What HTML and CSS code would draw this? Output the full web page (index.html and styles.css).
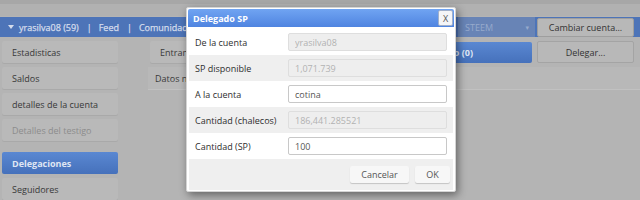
FILE: index.html
```html
<!DOCTYPE html>
<html lang="es">
<head>
<meta charset="utf-8">
<title>Delegado SP</title>
<link rel="stylesheet" href="styles.css">
</head>
<body>
<div class="top"></div>
<div class="nav">
  <div class="nav-left">
    <span class="caret"></span>
    <span class="nav-item">yrasilva08 (59)</span>
    <span class="sep">|</span>
    <span class="nav-item">Feed</span>
    <span class="sep">|</span>
    <span class="nav-item">Comunidades</span>
  </div>
  <div class="select"><span>STEEM</span><span class="sel-arrow">▾</span></div>
  <button class="top-btn">Cambiar cuenta...</button>
</div>
<div class="layout">
  <aside class="side">
    <div class="side-btn">Estadisticas</div>
    <div class="side-btn">Saldos</div>
    <div class="side-btn">detalles de la cuenta</div>
    <div class="side-btn disabled">Detalles del testigo</div>
    <div class="side-btn active">Delegaciones</div>
    <div class="side-btn">Seguidores</div>
  </aside>
  <main class="main">
    <div class="tabs">
      <div class="tab">Entrante (0)</div>
      <div class="tab tab-active">Delegado (0)</div>
      <button class="tab-btn">Delegar...</button>
    </div>
    <div class="panel">Datos no disponibles</div>
  </main>
</div>

<div class="dialog">
  <div class="dlg-title">
    <span>Delegado SP</span>
    <button class="dlg-close">X</button>
  </div>
  <div class="row first">
    <label class="lbl">De la cuenta</label>
    <input class="inp" value="yrasilva08" disabled>
  </div>
  <div class="row alt">
    <label class="lbl">SP disponible</label>
    <input class="inp" value="1,071.739" disabled>
  </div>
  <div class="row">
    <label class="lbl">A la cuenta</label>
    <input class="inp" value="cotina">
  </div>
  <div class="row alt">
    <label class="lbl">Cantidad (chalecos)</label>
    <input class="inp" value="186,441.285521" disabled>
  </div>
  <div class="row">
    <label class="lbl">Cantidad (SP)</label>
    <input class="inp" value="100">
  </div>
  <div class="dlg-foot">
    <button class="foot-btn cancel">Cancelar</button>
    <button class="foot-btn ok">OK</button>
  </div>
</div>
</body>
</html>
```
FILE: styles.css
```css
* { box-sizing: border-box; }
html, body { margin: 0; padding: 0; }
body {
  width: 640px;
  height: 200px;
  overflow: hidden;
  position: relative;
  background: #b4b4b4;
  font-family: "Open Sans", "DejaVu Sans", sans-serif;
  font-size: 9px;
  color: #3a3a3a;
}
button, input { font-family: inherit; font-size: 9px; }

.top {
  height: 16px;
  background: linear-gradient(#a7a7a7 0, #a7a7a7 4px, #b1b1b1 4px);
}
.nav {
  height: 20px;
  margin-top: 1px;
  display: flex;
  align-items: center;
  background: #4d74b8;
}
.nav-left {
  flex: 1;
  display: flex;
  align-items: center;
  height: 100%;
  padding-left: 8px;
  font-size: 9px;
  color: #d4dcec;
  -webkit-text-stroke: 0.25px #d4dcec;
}
.caret {
  width: 0; height: 0;
  border-left: 3px solid transparent;
  border-right: 3px solid transparent;
  border-top: 4px solid #d4dcec;
  margin-right: 5px;
}
.sep { margin: 0 7px 0 8px; }
.select {
  width: 77px;
  height: 20px;
  background: #6884b6;
  color: #97aacc;
  display: flex;
  align-items: center;
  justify-content: space-between;
  padding: 0 6px 0 7px;
  font-size: 9px;
}
.sel-arrow { font-size: 7px; }
.top-btn {
  width: 97px;
  height: 19px;
  margin: 0 6px 0 2px;
  background: #b8b8b8;
  border: 1px solid #9e9e9e;
  border-radius: 2px;
  color: #333;
  padding: 0;
}

.layout { display: flex; }
.side {
  width: 116px;
  margin-left: 2px;
  padding-top: 4px;
  display: flex;
  flex-direction: column;
  gap: 4px;
}
.side-btn {
  height: 22px;
  display: flex;
  align-items: center;
  padding-left: 10px;
  background: #b9b9b9;
  border-radius: 2px;
  box-shadow: 0 1px 0 #a9a9a9;
  color: #383838;
}
.side-btn.disabled { color: #8c8c8c; }
.side-btn.active {
  margin-top: 7px;
  background: linear-gradient(#5a88d2, #4671bb);
  color: #dfe6f3;
  font-weight: bold;
  box-shadow: none;
}

.main { flex: 1; margin-left: 30px; padding-top: 4px; }
.tabs {
  display: flex;
  gap: 4px;
  padding-left: 2px;
  height: 22px;
}
.tab {
  flex: 1;
  display: flex;
  align-items: center;
  padding-left: 10px;
  background: #b9b9b9;
  border-radius: 2px;
  box-shadow: 0 1px 0 #a9a9a9;
}
.tab-active {
  background: linear-gradient(#5a88d2, #4671bb);
  color: #dfe6f3;
  font-weight: bold;
  justify-content: flex-end;
  padding-right: 59px;
  box-shadow: none;
  margin-top: 1px;
}
.tab-btn {
  width: 97px;
  margin-right: 6px;
  margin-left: 1px;
  background: #b8b8b8;
  border: 1px solid #a4a4a4;
  border-radius: 2px;
  color: #333;
  padding: 0;
}
.panel {
  margin-top: 4px;
  height: 23px;
  display: flex;
  align-items: center;
  padding-left: 7px;
  background: #b8b8b8;
  border-bottom: 1px solid #c1c1c1;
  color: #3a3a3a;
}

/* dialog */
.dialog {
  position: absolute;
  left: 186px;
  top: 7px;
  width: 270px;
  background: #fff;
  border: 1px solid #d4d4d4;
  border-radius: 2px;
  padding: 1px;
  box-shadow: 2px 3px 8px rgba(0, 0, 0, 0.45);
}
.dlg-title {
  height: 18px;
  display: flex;
  align-items: center;
  justify-content: space-between;
  padding-left: 5px;
  background: linear-gradient(#70a4f2, #4f84e0);
  border-radius: 2px 2px 0 0;
  color: #fff;
  font-weight: bold;
  font-size: 9px;
}
.dlg-close {
  width: 15px;
  height: 16px;
  margin-right: 1px;
  padding: 0;
  background: #f4f5f7;
  border: 1px solid #9fb0cc;
  border-radius: 2px;
  color: #555;
  font-size: 9px;
}
.row {
  height: 26px;
  margin: 0 1px;
  display: flex;
  align-items: center;
  padding: 0 6px;
  background: #fff;
}
.row.first { margin-top: 2px; }
.row.alt { background: #efefef; }
.lbl { width: 93px; color: #2e2e2e; }
.inp {
  width: 159px;
  height: 18px;
  padding: 0 0 0 6px;
  border: 1px solid #c8c8c8;
  border-radius: 2px;
  background: #fff;
  color: #555;
  outline: none;
}
.inp:disabled {
  background: #eeeeee;
  border-color: #dedede;
  color: #b2b2b2;
}
.dlg-foot {
  height: 31px;
  margin: 0 1px;
  display: flex;
  align-items: center;
  justify-content: flex-end;
  gap: 6px;
  padding-right: 3px;
  background: #efefef;
}
.foot-btn {
  height: 17px;
  padding: 0;
  border: none;
  border-radius: 2px;
  background: #f7f7f7;
  box-shadow: 0 1px 1px rgba(0, 0, 0, 0.18);
  color: #555;
}
.cancel { width: 59px; }
.ok { width: 35px; }
```
